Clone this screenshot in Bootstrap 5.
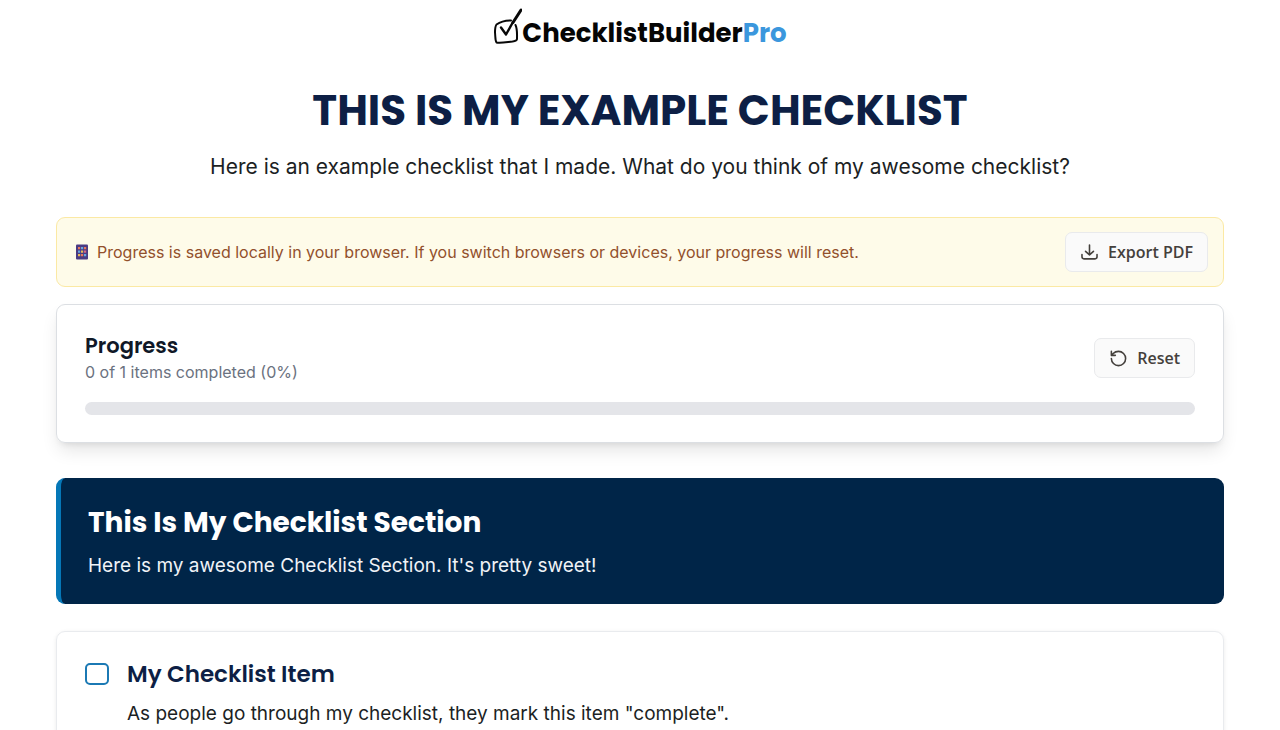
<!DOCTYPE html>
<html lang="en">
<head>
<meta charset="utf-8">
<meta name="viewport" content="width=device-width, initial-scale=1">
<title>This Is My Example Checklist</title>
<link href="https://cdn.jsdelivr.net/npm/bootstrap@5.3.0/dist/css/bootstrap.min.css" rel="stylesheet">
<style>
  body { font-family: Inter, "Liberation Sans", sans-serif; color: #1c1f24; background: #fff; }
  h1, h2, h3 { font-family: Poppins, Inter, "Liberation Sans", sans-serif; }
  .page { max-width: 1192px; }
  .brand { font: 700 26px/26px Poppins, Inter, sans-serif; color: #050505; }
  .brand span { color: #3b97dd; }
  .title { font-size: 42px; line-height: 48px; font-weight: 700; color: #0d1f45; margin-top: 41px; }
  .intro { font-size: 21px; line-height: 32px; margin-bottom: 34px; }
  .panel { border-radius: 9px; }
  .notice { background: #fefbe9; border: 1px solid #fbe9a4; color: #92502c; font-size: 16px; line-height: 24px; padding: 14px 15px 14px 18px; margin-bottom: 17px; }
  .tool-btn { font: 600 16px/24px "Open Sans", "Noto Sans", sans-serif; color: #44403c; background: #fafafa; border: 1px solid #e9eaec; border-radius: 7px; padding: 7px 14px; gap: 9px; }
  .status { border: 1px solid #dcdfe3; box-shadow: 0 10px 18px -3px rgba(0,0,0,.11), 0 4px 7px -4px rgba(0,0,0,.11); padding: 27px 28px; margin-bottom: 35px; }
  .status-top { margin-bottom: 18px; }
  .status h2 { font-size: 21px; line-height: 28px; font-weight: 600; color: #101827; }
  .status p { font-size: 16px; line-height: 24px; color: #6b7280; }
  .track { height: 13px; background: #e4e5e9; border-radius: 7px; }
  .section-head { background: #002548; border-left: 5px solid #0577b7; color: #fff; padding: 24px 27px; margin-bottom: 27px; }
  .section-head h2 { font-size: 28px; line-height: 42px; font-weight: 700; }
  .section-head p { font-size: 19px; line-height: 28px; color: #f0f3f7; }
  .task { border: 1px solid #e9ebee; box-shadow: 0 1px 4px rgba(0,0,0,.08); padding: 24px 28px 40px; gap: 18px; }
  .task h3 { font-size: 23px; line-height: 36px; font-weight: 600; color: #0d1f45; }
  .task p { font-size: 19px; line-height: 28px; }
  .task .form-check-input { width: 24px; height: 22px; margin-top: 7px; border: 2px solid #1b79b4; border-radius: 5px; }
</style>
</head>
<body>
<div class="page container-fluid">
  <header class="text-center">
    <div class="brand d-flex justify-content-center align-items-end pt-2">
      <svg width="29" height="38" viewBox="0 0 29 38" fill="none" stroke="#080808" stroke-linecap="round" stroke-linejoin="round" aria-hidden="true">
        <path stroke-width="2" d="M18 12.500C13 12.500 7 14 3.500 16.500c-1.500 2-1.500 4-1.500 8 .500 4 0 8 1.500 10 3 1 8 0 16-1 3-.500 4.500-1 4.500-2.500 0-4 .5-10-1.500-14"/>
        <path stroke-width="2.400" d="M8 19.500l5 7L20 14"/>
        <path stroke-width="3" d="M20 14.500L28 2"/>
      </svg>
      <div>ChecklistBuilder<span>Pro</span></div>
    </div>
    <h1 class="title mb-3">THIS IS MY EXAMPLE CHECKLIST</h1>
    <p class="intro">Here is an example checklist that I made. What do you think of my awesome checklist?</p>
  </header>
  <main>
    <div class="notice panel d-flex flex-wrap align-items-center justify-content-between gap-2">
      <div class="d-flex align-items-center gap-2">
        <svg width="14" height="16" viewBox="0 0 14 16" aria-hidden="true">
          <rect x="1" y=".5" width="12" height="15" rx="1" fill="#4a3b83"/>
          <path fill="#e8795b" d="M3 3h2.200v2.200H3zM9 3h2.200v2.200H9zM6 10h2.200v2.200H6z"/>
          <path fill="#67a7e0" d="M6 3h2.200v2.200H6zM3 6.500h2.200v2.200H3zM9 10h2.200v2.200H9z"/>
          <path fill="#e7b95a" d="M6 6.500h2.200v2.200H6zM3 10h2.200v2.200H3z"/>
          <path fill="#d96786" d="M9 6.500h2.200v2.200H9z"/>
        </svg>
        <span>Progress is saved locally in your browser. If you switch browsers or devices, your progress will reset.</span>
      </div>
      <button type="button" class="tool-btn d-flex align-items-center">
        <svg width="19" height="19" viewBox="0 0 24 24" fill="none" stroke="currentColor" stroke-width="2" stroke-linecap="round" stroke-linejoin="round" aria-hidden="true"><path d="M12 2.500V15M7 10.500l5 4.500 5-4.500M21.500 14.500v3a2.500 2.500 0 0 1-2.500 2.500H5a2.500 2.500 0 0 1-2.500-2.500v-3"/></svg>
        Export PDF
      </button>
    </div>
    <section class="status panel">
      <div class="status-top d-flex align-items-center justify-content-between">
        <div>
          <h2 class="mb-0">Progress</h2>
          <p class="mb-0">0 of 1 items completed (0%)</p>
        </div>
        <button type="button" class="tool-btn d-flex align-items-center">
          <svg width="19" height="19" viewBox="0 0 24 24" fill="none" stroke="currentColor" stroke-width="2" stroke-linecap="round" stroke-linejoin="round" aria-hidden="true"><path d="M3 12a9 9 0 1 0 9-9 9.750 9.750 0 0 0-6.740 2.740L3 8M3 3v5h5"/></svg>
          Reset
        </button>
      </div>
      <div class="track" role="progressbar" aria-label="Progress" aria-valuenow="0" aria-valuemin="0" aria-valuemax="100"></div>
    </section>
    <section>
      <div class="section-head panel">
        <h2 class="mb-2">This Is My Checklist Section</h2>
        <p class="mb-0">Here is my awesome Checklist Section. It's pretty sweet!</p>
      </div>
      <div class="task panel d-flex">
        <input class="form-check-input flex-shrink-0" type="checkbox" id="item1">
        <div>
          <h3 class="mb-2"><label for="item1">My Checklist Item</label></h3>
          <p class="mb-0">As people go through my checklist, they mark this item "complete".</p>
        </div>
      </div>
    </section>
  </main>
</div>
<script src="https://cdn.jsdelivr.net/npm/bootstrap@5.3.0/dist/js/bootstrap.bundle.min.js"></script>
</body>
</html>
